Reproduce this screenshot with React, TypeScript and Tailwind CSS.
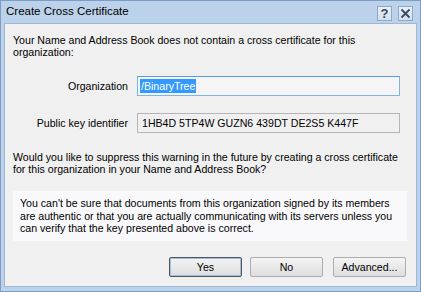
import React from "react";

const font = { fontFamily: '"Liberation Sans", Arial, sans-serif' };

function DialogButton({ label, isDefault }: { label: string; isDefault?: boolean }) {
  return (
    <button
      type="button"
      className={`w-[73px] h-[20px] text-[10.6px] text-black rounded-[2px] bg-gradient-to-b from-[#f4f4f4] to-[#dedede] ${
        isDefault ? "border border-[#555] shadow-[inset_0_0_0_1px_#9ac0e8]" : "border border-[#adadad]"
      }`}
    >
      {label}
    </button>
  );
}

function TitleButton({ children }: { children: React.ReactNode }) {
  return (
    <div className="w-[15px] h-[15px] flex items-center justify-center border border-[#8ea8c8] bg-gradient-to-b from-[#e8eff8] to-[#d3e0ef] text-[#3a4a60] text-[13px] font-bold leading-none">
      {children}
    </div>
  );
}

export default function App() {
  return (
    <div className="w-[421px] h-[292px] bg-[#bcd2ea] border border-[#7d9cc6] flex flex-col overflow-hidden" style={font}>
      {/* title bar */}
      <div className="h-[22px] shrink-0 flex items-center justify-between pl-[5px] pr-[7px]">
        <span className="text-[11.5px] text-black">Create Cross Certificate</span>
        <div className="flex gap-[6px] mt-[2px]">
          <TitleButton>?</TitleButton>
          <TitleButton>
            <svg width="11" height="11" viewBox="0 0 11 11">
              <path d="M1.5 1.5 L9.5 9.5 M9.5 1.5 L1.5 9.5" stroke="#3a4a60" strokeWidth="1.8" />
            </svg>
          </TitleButton>
        </div>
      </div>

      {/* client area */}
      <div className="flex-1 mx-[3px] mb-[4px] bg-[#f0f0f0] border border-[#9fb6d4] text-[10.6px] text-black leading-[12px] whitespace-nowrap pt-[10px] px-[8px] flex flex-col">
        <p>
          Your Name and Address Book does not contain a cross certificate for this
          <br />
          organization:
        </p>

        <div className="mt-[18px] grid grid-cols-[115px_263px] gap-x-[9px] gap-y-[17px] items-center">
          <span className="text-right">Organization</span>
          <div className="h-[20px] border border-[#7eb4ea] border-t-[#569de5] bg-[#f5f5f5] flex items-center pl-[2px]">
            <span className="bg-[#3399ff] text-white px-[1px] leading-[14px]">/BinaryTree</span>
          </div>
          <span className="text-right">Public key identifier</span>
          <div className="h-[20px] border border-[#b5b5b5] bg-[#f0f0f0] flex items-center pl-[4px]">
            1HB4D 5TP4W GUZN6 439DT DE2S5 K447F
          </div>
        </div>

        <p className="mt-[18px]">
          Would you like to suppress this warning in the future by creating a cross certificate
          <br />
          for this organization in your Name and Address Book?
        </p>

        <div className="mt-[16px] mr-[1px] bg-[#f9f9fb] px-[7px] pt-[6px] pb-[6px] leading-[12.5px]">
          You can't be sure that documents from this organization signed by its members
          <br />
          are authentic or that you are actually communicating with its servers unless you
          <br />
          can verify that the key presented above is correct.
        </div>

        <div className="mt-[16px] flex justify-end gap-[8px] pr-[2px]">
          <DialogButton label="Yes" isDefault />
          <DialogButton label="No" />
          <div className="ml-[2px]">
            <DialogButton label="Advanced..." />
          </div>
        </div>
      </div>
    </div>
  );
}
